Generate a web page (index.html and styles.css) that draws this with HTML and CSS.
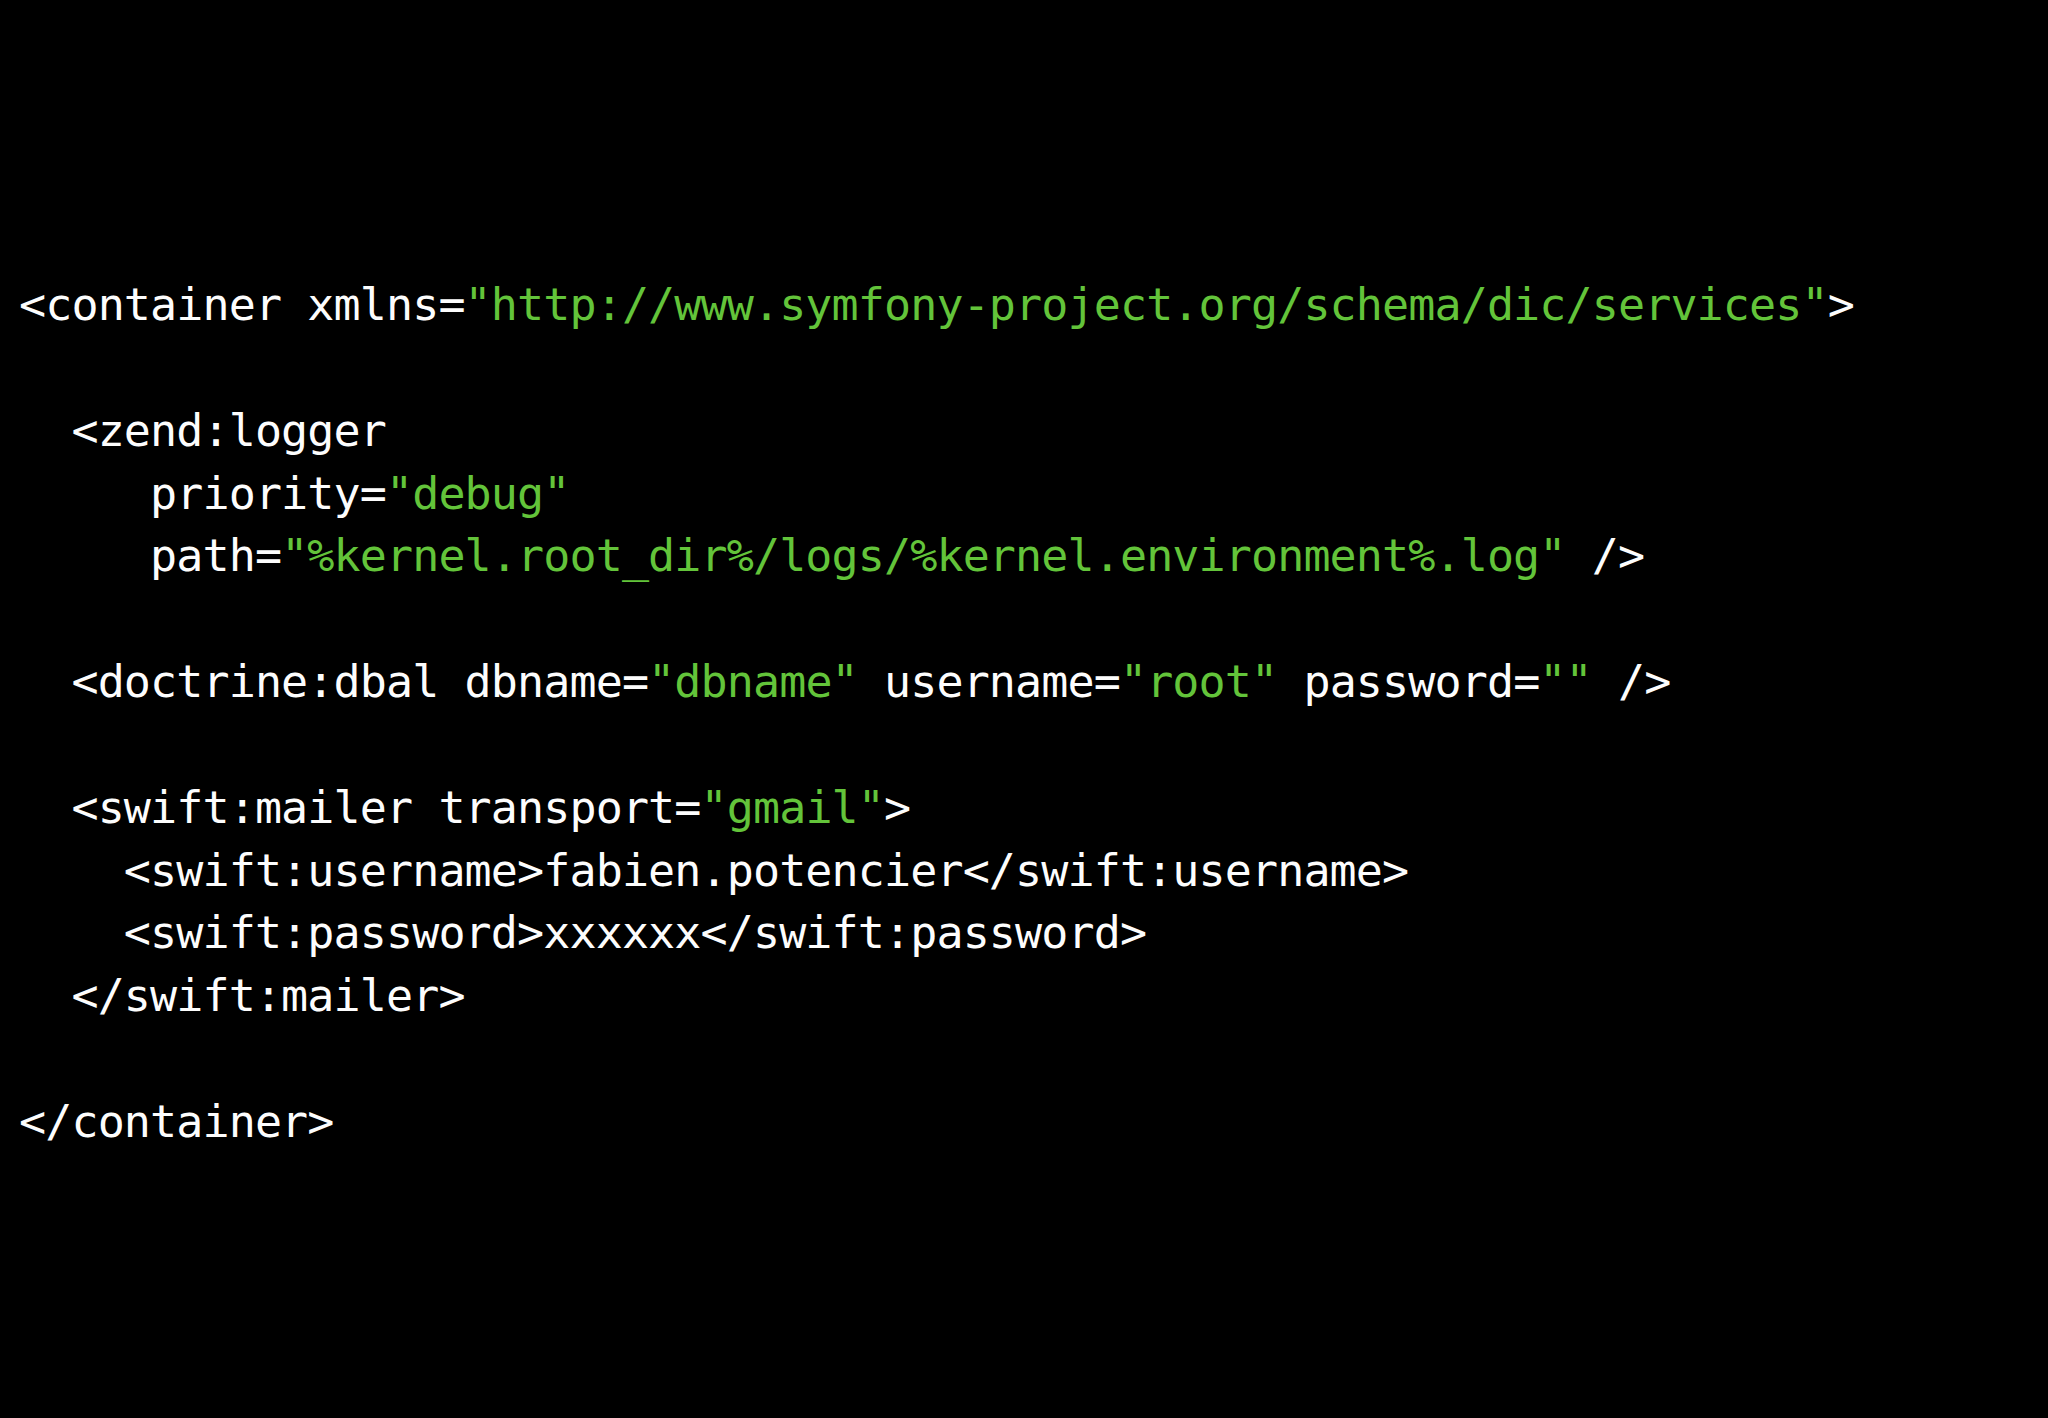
FILE: index.html
```html
<!DOCTYPE html>
<html lang="en">
<head>
<meta charset="utf-8">
<title>Symfony DIC XML</title>
<link rel="stylesheet" href="styles.css">
</head>
<body>
<main class="slide">
<pre class="code"><code>&lt;container xmlns=<span class="str">"http://www.symfony-project.org/schema/dic/services"</span>&gt;

  &lt;zend:logger
     priority=<span class="str">"debug"</span>
     path=<span class="str">"%kernel.root_dir%/logs/%kernel.environment%.log"</span> /&gt;

  &lt;doctrine:dbal dbname=<span class="str">"dbname"</span> username=<span class="str">"root"</span> password=<span class="str">""</span> /&gt;

  &lt;swift:mailer transport=<span class="str">"gmail"</span>&gt;
    &lt;swift:username&gt;fabien.potencier&lt;/swift:username&gt;
    &lt;swift:password&gt;xxxxxx&lt;/swift:password&gt;
  &lt;/swift:mailer&gt;

&lt;/container&gt;</code></pre>
</main>
</body>
</html>
```

FILE: styles.css
```css
html, body {
  margin: 0;
  padding: 0;
  background: #000;
}

.slide {
  width: 2048px;
  height: 1418px;
  background: #000;
  box-sizing: border-box;
  padding: 274px 0 0 19px;
  overflow: hidden;
}

.code {
  margin: 0;
  font-family: "DejaVu Sans Mono", "Liberation Mono", monospace;
  font-size: 45px;
  letter-spacing: -0.88px;
  line-height: 62.85px;
  color: #fdfdfd;
  white-space: pre;
}

.code code {
  font: inherit;
}

.str {
  color: #63c43a;
}
```
